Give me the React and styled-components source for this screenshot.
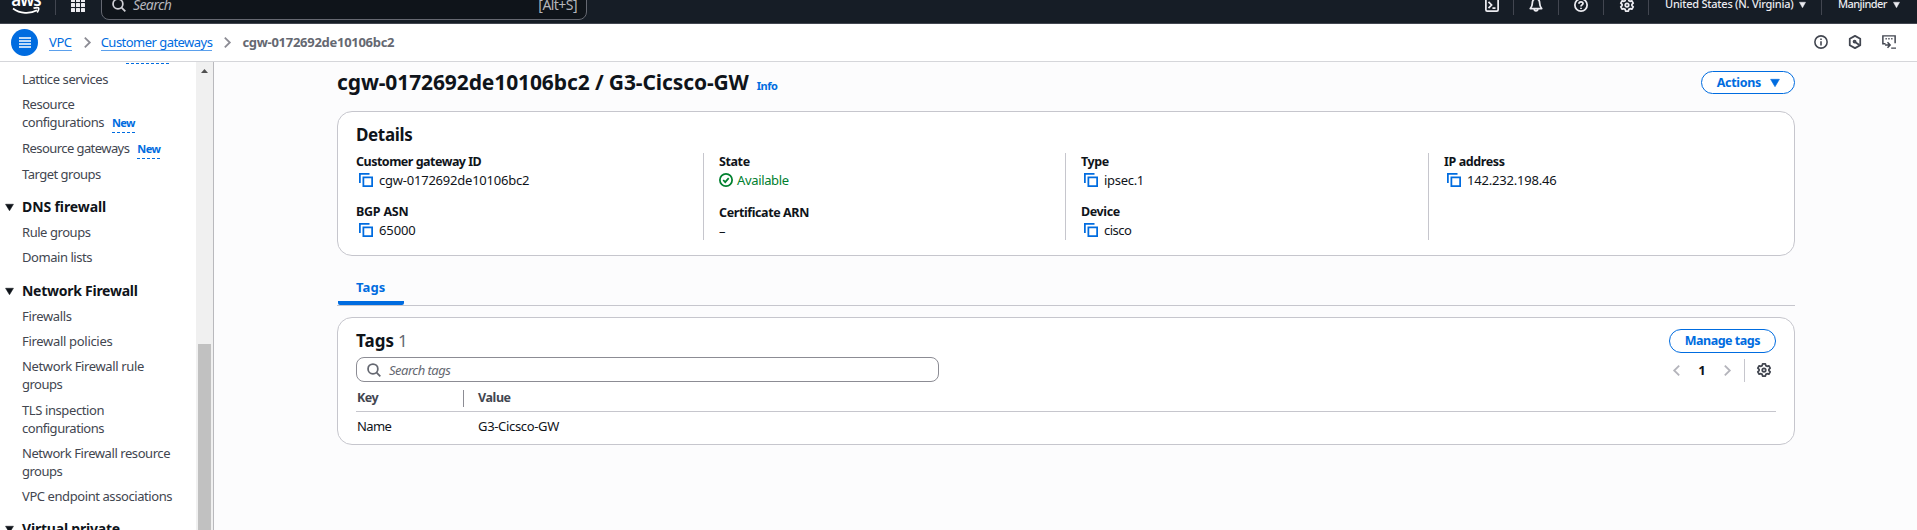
import React from "react";
import styled, { createGlobalStyle } from "styled-components";

const Global = createGlobalStyle`
  * { box-sizing: border-box; }
  html, body { margin: 0; overflow: hidden; }
  body {
    background: #fcfcfd;
    color: #0f141a;
    font-family: "Noto Sans", "Open Sans", sans-serif;
    font-size: 13px;
    line-height: 18px;
  }
  svg { display: block; flex: none; overflow: visible; }
`;

const Page = styled.div`
  display: flex;
  flex-direction: column;
  height: 530px;
  overflow: hidden;
`;

/* Text run with its own tracking */
const Text = styled.span`
  letter-spacing: ${(p) => p.$ls || 0}px;
  white-space: nowrap;
`;

/* ---------- top bar ---------- */
const TopBar = styled.header`
  flex: none;
  height: 24px;
  overflow: hidden;
  background: #161d26;
  border-bottom: 1px solid #424650;
`;
const TopInner = styled.div`
  display: flex;
  align-items: center;
  height: 40px;
  margin-top: -15px;
  color: #ebebf0;
`;
const Logo = styled.div`
  width: 28px;
  height: 28px;
  margin: 0 15px 0 12px;
  padding-top: 1px;
  display: flex;
  flex-direction: column;
  align-items: center;
`;
const LogoWord = styled.span`
  font-size: 17px;
  font-weight: 600;
  line-height: 16px;
  height: 15px;
  letter-spacing: -1px;
  color: #fff;
`;
const Divider = styled.span`
  flex: none;
  width: 1px;
  height: ${(p) => p.$h || 20}px;
  background: ${(p) => p.$color || "#424650"};
`;
const Apps = styled.div`
  display: grid;
  grid-template-columns: repeat(3, 4px);
  grid-auto-rows: 4px;
  gap: 1px;
  margin: 0 16px 0 15px;
  i { background: #ebebf0; border-radius: 0.5px; }
`;
const GlobalSearch = styled.div`
  width: 486px;
  height: 29px;
  display: flex;
  align-items: center;
  padding: 0 9px 0 10px;
  border: 1px solid #656871;
  border-radius: 8px;
  background: #0f141a;
  color: #b4b4bb;
  font-size: 14px;
  gap: 7px;
  span:last-child { margin-left: auto; }
`;
const TopRight = styled.nav`
  margin-left: auto;
  display: flex;
  align-items: center;
`;
const TopIcon = styled.span`
  width: 44px;
  padding-left: ${(p) => p.$shift || 0}px;
  display: flex;
  justify-content: center;
`;
const TopMenu = styled.span`
  width: ${(p) => p.$w}px;
  padding-left: 16px;
  display: flex;
  align-items: center;
  gap: 6px;
  font-size: 11px;
  font-weight: 500;
  span { padding-bottom: 2px; }
`;

/* ---------- breadcrumb bar ---------- */
const CrumbBar = styled.div`
  flex: none;
  height: 38px;
  display: flex;
  align-items: center;
  padding: 0 21px 1px 11px;
  background: #fff;
  border-bottom: 1px solid #d5d6da;
`;
const MenuButton = styled.button`
  width: 27px;
  height: 27px;
  padding: 0;
  margin: 1px 11px 0 0;
  border: 0;
  border-radius: 50%;
  background: #006ce0;
  display: flex;
  align-items: center;
  justify-content: center;
`;
const Crumb = styled.a`
  height: 18px;
  color: #006ce0;
  letter-spacing: ${(p) => p.$ls || 0}px;
  border-bottom: 1px solid #5ba0ec;
  line-height: 18px;
`;
const CrumbCurrent = styled.span`
  color: #656871;
  font-weight: 700;
  letter-spacing: -0.28px;
`;
const CrumbSep = styled.span`
  margin: 0 ${(p) => p.$r}px 0 12px;
`;
const CrumbTools = styled.div`
  margin-left: auto;
  display: flex;
  gap: 20px;
`;

/* ---------- sidebar ---------- */
const Body = styled.div`
  flex: 1;
  min-height: 0;
  display: flex;
`;
const Sidebar = styled.aside`
  flex: none;
  width: 214px;
  display: flex;
  background: #fff;
  border-right: 1px solid #b9b9bd;
`;
const SideList = styled.div`
  width: 196px;
  height: 468px;
  overflow: hidden;
  padding-left: 22px;
`;
const CutBadge = styled.div`
  width: 43px;
  height: 2px;
  margin-left: 104px;
  border-bottom: 1px dashed #006ce0;
`;
const Item = styled.div`
  margin-top: ${(p) => p.$gap}px;
  color: #424650;
`;
const Section = styled.div`
  display: flex;
  align-items: center;
  gap: 8px;
  height: 18px;
  margin: ${(p) => p.$gap}px 0 0 -17px;
  font-size: 14px;
  font-weight: 700;
`;
const New = styled.b`
  margin-left: 8px;
  padding-bottom: 2px;
  font-size: 11px;
  line-height: 12px;
  letter-spacing: -0.6px;
  color: #006ce0;
  border-bottom: 1px dashed #006ce0;
`;
const Scrollbar = styled.div`
  width: 17px;
  height: 468px;
  background: #f0f0f0;
  display: flex;
  flex-direction: column;
  align-items: center;
  padding-top: 7px;
`;
const Thumb = styled.div`
  width: 13px;
  flex: 1;
  margin-top: 271px;
  background: #c1c1c1;
`;

/* ---------- main ---------- */
const Main = styled.main`
  width: 1458px;
  margin-left: 123px;
  padding-top: 9px;
`;
const TitleRow = styled.div`
  height: 23px;
  display: flex;
  justify-content: space-between;
`;
const Title = styled.h1`
  margin: -1px 0 0;
  font-size: 21px;
  font-weight: 700;
  line-height: 24px;
  letter-spacing: -0.11px;
`;
const Info = styled.a`
  margin-left: 8px;
  font-size: 11px;
  color: #006ce0;
  letter-spacing: -0.5px;
`;
const Button = styled.button`
  height: ${(p) => p.$h}px;
  padding: 0 ${(p) => p.$pr}px ${(p) => p.$pb || 0}px 15px;
  display: flex;
  align-items: center;
  gap: 9px;
  border: 1px solid #006ce0;
  border-radius: 12px;
  background: #fff;
  color: #006ce0;
  font: 700 12.5px/18px "Noto Sans", sans-serif;
`;
const Card = styled.section`
  height: ${(p) => p.$h}px;
  margin-top: ${(p) => p.$mt}px;
  padding: ${(p) => p.$pt}px 18px 0;
  border: 1px solid #c6c6cd;
  border-radius: 15px;
  background: #fff;
`;
const CardTitle = styled.h2`
  margin: 0;
  font-size: 17px;
  line-height: 24px;
  letter-spacing: ${(p) => p.$ls || 0}px;
  span { font-weight: 400; color: #656871; margin-left: 4px; }
`;
const Columns = styled.div`
  display: grid;
  grid-template-columns: 347px 362px 363px 1fr;
  grid-template-rows: 87px;
  margin-top: 6px;
`;
const Column = styled.div`
  padding-left: ${(p) => (p.$first ? 0 : 15)}px;
  border-left: ${(p) => (p.$first ? "0" : "1px solid #c6c6cd")};
`;
const Field = styled.div`
  margin-bottom: ${(p) => p.$gap || 14}px;
`;
const Label = styled.div`
  font-size: 12.5px;
  font-weight: 700;
  letter-spacing: ${(p) => p.$ls || -0.4}px;
`;
const Value = styled.div`
  display: flex;
  align-items: center;
  height: 18px;
  gap: ${(p) => (p.$ok ? 4 : 6)}px;
  padding-left: ${(p) => (p.$copy ? 3 : 0)}px;
  color: ${(p) => (p.$ok ? "#00802f" : "inherit")};
`;
const Tabs = styled.div`
  height: 28px;
  margin-top: 22px;
  border-bottom: 1px solid #c6c6cd;
`;
const Tab = styled.div`
  width: 66px;
  height: 27px;
  margin-left: 1px;
  padding-left: 18px;
  color: #006ce0;
  font-size: 13px;
  font-weight: 700;
  line-height: 18px;
  letter-spacing: 0.1px;
  border-bottom: 4px solid #006ce0;
  border-radius: 2px;
`;
const Row = styled.div`
  display: flex;
  align-items: ${(p) => p.$align || "center"};
  justify-content: space-between;
`;
const TagSearch = styled.div`
  width: 583px;
  height: 25px;
  display: flex;
  align-items: center;
  gap: 8px;
  margin-top: 4px;
  padding-left: 10px;
  border: 1px solid #8c8c94;
  border-radius: 8px;
  color: #656871;
`;
const Pager = styled.div`
  display: flex;
  align-items: center;
  margin-right: 5px;
  padding-top: 5px;
  font-weight: 700;
`;
const PageNumber = styled.span`
  width: 44px;
  text-align: center;
`;
const PagerDivider = styled(Divider)`
  margin: 0 12px 0 13px;
`;
const HeadRow = styled.div`
  display: flex;
  align-items: center;
  height: 30px;
  padding: 3px 0 0 1px;
  color: #424650;
  font-size: 12.5px;
  font-weight: 700;
  border-bottom: 1px solid #c6c6cd;
`;
const BodyRow = styled.div`
  display: flex;
  align-items: center;
  height: 28px;
  padding-left: 1px;
`;
const KeyCell = styled.div`
  width: ${(p) => p.$w}px;
`;
const ValueCell = styled.div`
  padding-left: 14px;
`;

/* ---------- drawings ---------- */
const Caret = ({ w = 11, h = 8, c = "#0f141a", up }) => (
  <svg width={w} height={h} viewBox="0 0 10 8" preserveAspectRatio="none">
    <path d={up ? "M5 0 10 8H0z" : "M.6.3h8.8L5 7.7z"} fill={c} stroke={c} strokeWidth={up ? 0 : 0.6} strokeLinejoin="round" />
  </svg>
);
const Icon = ({ size = 14, c = "currentColor", sw = 2, children }) => (
  <svg width={size} height={size} viewBox="0 0 16 16" fill="none" stroke={c} strokeWidth={sw}>
    {children}
  </svg>
);
const SearchIcon = (p) => (
  <Icon {...p}><circle cx="6.8" cy="6.8" r="5.6" /><path d="m11 11 4.2 4.2" /></Icon>
);
const Gear = (p) => (
  <Icon {...p}>
    <path strokeLinejoin="round" d="M6.4 1h3.2l.5 2 1.4.8 2-.6 1.6 2.7-1.5 1.4v1.4l1.5 1.4-1.6 2.7-2-.6-1.4.8-.5 2H6.4l-.5-2-1.4-.8-2 .6L.9 10.1l1.5-1.4V7.3L.9 5.9l1.6-2.7 2 .6 1.4-.8z" />
    <circle cx="8" cy="8" r="2" />
  </Icon>
);
const Copy = () => (
  <Icon c="#006ce0"><path d="M1 11.5V1h11" /><path d="M5 5h10v10H5z" /></Icon>
);
const Check = () => (
  <Icon><circle cx="8" cy="8" r="7" /><path d="m4.8 8 2.3 2.4 4-4.6" /></Icon>
);
const Chevron = ({ left, c = "#8c8c94", w = 7, h = 11 }) => (
  <svg width={w} height={h} viewBox="0 0 7 11" fill="none" stroke={c} strokeWidth="1.8">
    <path d={left ? "M6.2.6l-5 4.900 5 4.900" : "M.8.6l5 4.900-5 4.900"} />
  </svg>
);

const CopyValue = ({ ls, children }) => (
  <Value $copy><Copy /><Text $ls={ls}>{children}</Text></Value>
);

export default function App() {
  return (
    <Page>
      <Global />
      <TopBar>
        <TopInner>
          <Logo>
            <LogoWord>aws</LogoWord>
            <svg width="28" height="8" viewBox="0 0 28 8" fill="none" stroke="#fff" strokeWidth="1.7">
              <path d="M1 1.500c7 5.300 17 5.700 24 1.800M21.500 1.200c2.500-.6 5-.6 5.200.1.200.8-.4 2.800-1.500 4.200" />
            </svg>
          </Logo>
          <Divider />
          <Apps>{Array.from({ length: 9 }, (_, i) => <i key={i} />)}</Apps>
          <GlobalSearch>
            <SearchIcon c="#d0d0d6" />
            <Text as="em" $ls={-0.6}>Search</Text>
            <Text $ls={-0.55}>[Alt+S]</Text>
          </GlobalSearch>
          <TopRight>
            <TopIcon $shift={2}><Icon><rect x="1" y="1" width="14" height="14" rx="1.5" /><path d="m4 4.500 3.500 3.500L4 11.500M8.500 11.500H12" /></Icon></TopIcon>
            <Divider />
            <TopIcon><Icon><path strokeLinejoin="round" d="M8 1C5 1 3.800 3.200 3.800 6c0 3-1 4.500-2.300 6h13c-1.300-1.500-2.300-3-2.300-6 0-2.800-1.200-5-4.200-5zM6 12.500c0 2.800 4 2.800 4 0" /></Icon></TopIcon>
            <Divider />
            <TopIcon><Icon><circle cx="8" cy="8" r="7" /><path d="M5.700 6.500c0-3 4.600-2.800 4.600-.2C10.300 8 8 7.800 8 9.800M8 11v1.700" /></Icon></TopIcon>
            <Divider />
            <TopIcon $shift={2}><Gear /></TopIcon>
            <Divider />
            <TopMenu $w={172}><Text $ls={-0.24}>United States (N. Virginia)</Text><Caret w={7} h={6} c="#ebebf0" /></TopMenu>
            <Divider />
            <TopMenu $w={95}><Text $ls={-0.56}>Manjinder</Text><Caret w={7} h={6} c="#ebebf0" /></TopMenu>
          </TopRight>
        </TopInner>
      </TopBar>

      <CrumbBar>
        <MenuButton>
          <svg width="12" height="11" viewBox="0 0 12 11" stroke="#fff" strokeWidth="1.6"><path d="M0 1h12M0 4h12M0 7h12M0 10h12" /></svg>
        </MenuButton>
        <Crumb $ls={-0.4}>VPC</Crumb>
        <CrumbSep $r={10}><Chevron /></CrumbSep>
        <Crumb $ls={-0.53}>Customer gateways</Crumb>
        <CrumbSep $r={11}><Chevron /></CrumbSep>
        <CrumbCurrent>cgw-0172692de10106bc2</CrumbCurrent>
        <CrumbTools>
          <Icon c="#424650" sw={1.8}><circle cx="8" cy="8" r="7" /><path d="M8 7v5M8 4v1.800" /></Icon>
          <Icon c="#424650"><path strokeLinejoin="round" d="m8 1 6 3.400v7.200L8 15l-6-3.400V4.400z" /><circle cx="7.5" cy="7.5" r="1.2" /><path d="m8 8 5 3.500" /></Icon>
          <Icon c="#424650" sw={1.7}><path d="M4 10H1V1h14v8.500M10.500 15H16" /><path d="M4 4.300h1.500M7.200 4.300h1.500M10.500 4.300H12M3.500 11.500H9M6.300 8.300l3 3.200-3 3.200" /></Icon>
        </CrumbTools>
      </CrumbBar>

      <Body>
        <Sidebar>
          <SideList>
            <CutBadge />
            <Item $gap={6}><Text $ls={-0.4}>Lattice services</Text></Item>
            <Item $gap={7}><Text $ls={-0.48}>Resource</Text><br /><Text $ls={-0.47}>configurations</Text><New>New</New></Item>
            <Item $gap={8}><Text $ls={-0.57}>Resource gateways</Text><New>New</New></Item>
            <Item $gap={8}><Text $ls={-0.51}>Target groups</Text></Item>
            <Section $gap={15}><Caret w={9} h={7} /><Text $ls={-0.11}>DNS firewall</Text></Section>
            <Item $gap={7}><Text $ls={-0.45}>Rule groups</Text></Item>
            <Item $gap={7}><Text $ls={-0.45}>Domain lists</Text></Item>
            <Section $gap={16}><Caret w={9} h={7} /><Text $ls={-0.26}>Network Firewall</Text></Section>
            <Item $gap={7}><Text $ls={-0.35}>Firewalls</Text></Item>
            <Item $gap={7}><Text $ls={-0.31}>Firewall policies</Text></Item>
            <Item $gap={7}><Text $ls={-0.37}>Network Firewall rule</Text><br /><Text $ls={-0.5}>groups</Text></Item>
            <Item $gap={8}><Text $ls={-0.4}>TLS inspection</Text><br /><Text $ls={-0.47}>configurations</Text></Item>
            <Item $gap={7}><Text $ls={-0.43}>Network Firewall resource</Text><br /><Text $ls={-0.5}>groups</Text></Item>
            <Item $gap={7}><Text $ls={-0.42}>VPC endpoint associations</Text></Item>
            <Section $gap={15}><Caret w={9} h={7} /><Text $ls={-0.2}>Virtual private</Text></Section>
          </SideList>
          <Scrollbar><Caret up w={7} h={4} c="#505050" /><Thumb /></Scrollbar>
        </Sidebar>

        <Main>
          <TitleRow>
            <Title>cgw-0172692de10106bc2 / G3-Cicsco-GW<Info>Info</Info></Title>
            <Button $h={23} $pr={14}><Text $ls={-0.31}>Actions</Text><Caret w={10} h={8} c="#006ce0" /></Button>
          </TitleRow>

          <Card $mt={17} $pt={11} $h={145}>
            <CardTitle $ls={-0.36}>Details</CardTitle>
            <Columns>
              <Column $first>
                <Field><Label $ls={-0.5}>Customer gateway ID</Label><CopyValue ls={-0.22}>cgw-0172692de10106bc2</CopyValue></Field>
                <Field><Label $ls={-0.25}>BGP ASN</Label><CopyValue ls={-0.1}>65000</CopyValue></Field>
              </Column>
              <Column>
                <Field $gap={15}><Label>State</Label><Value $ok><Check /><Text $ls={-0.35}>Available</Text></Value></Field>
                <Field><Label>Certificate ARN</Label><Value>–</Value></Field>
              </Column>
              <Column>
                <Field><Label>Type</Label><CopyValue ls={-0.3}>ipsec.1</CopyValue></Field>
                <Field><Label>Device</Label><CopyValue ls={-0.5}>cisco</CopyValue></Field>
              </Column>
              <Column>
                <Field><Label>IP address</Label><CopyValue ls={-0.19}>142.232.198.46</CopyValue></Field>
              </Column>
            </Columns>
          </Card>

          <Tabs><Tab>Tags</Tab></Tabs>

          <Card $mt={11} $pt={11} $h={128}>
            <Row $align="flex-start">
              <CardTitle>Tags<span>1</span></CardTitle>
              <Button $h={24} $pr={15} $pb={1}><Text $ls={-0.48}>Manage tags</Text></Button>
            </Row>
            <Row>
              <TagSearch>
                <SearchIcon />
                <Text as="em" $ls={-0.52}>Search tags</Text>
              </TagSearch>
              <Pager>
                <Chevron left c="#b4b4bb" />
                <PageNumber>1</PageNumber>
                <Chevron c="#b4b4bb" />
                <PagerDivider $h={23} $color="#c6c6cd" />
                <Gear c="#424650" />
              </Pager>
            </Row>
            <HeadRow>
              <KeyCell $w={106}><Text $ls={-0.5}>Key</Text></KeyCell>
              <Divider $h={17} $color="#8c8c94" />
              <ValueCell><Text $ls={-0.4}>Value</Text></ValueCell>
            </HeadRow>
            <BodyRow>
              <KeyCell $w={107}><Text $ls={-0.6}>Name</Text></KeyCell>
              <ValueCell><Text $ls={-0.33}>G3-Cicsco-GW</Text></ValueCell>
            </BodyRow>
          </Card>
        </Main>
      </Body>
    </Page>
  );
}
